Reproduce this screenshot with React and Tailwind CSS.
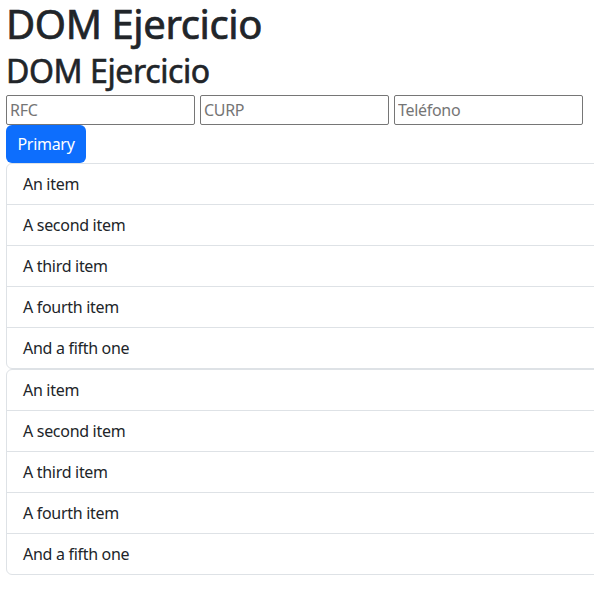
export default function App() {
  const items = ["An item", "A second item", "A third item", "A fourth item", "And a fifth one"];
  const List = () => (
    <ul className="w-[620px] border border-[#dee2e6] rounded-[6px] flex flex-col">
      {items.map((t, i) => (
        <li
          key={i}
          className={`px-4 flex items-center text-[16px] tracking-[-0.3px] text-[#212529] ${i < items.length - 1 ? "h-[41px] border-b border-[#dee2e6]" : "h-[40px]"}`}
        >
          {t}
        </li>
      ))}
    </ul>
  );
  return (
    <div
      className="w-[594px] h-[598px] overflow-hidden bg-white pl-[6px] text-[#212529]"
      style={{ fontFamily: '"Noto Sans", "Open Sans", sans-serif' }}
    >
      <h1 className="text-[40px] leading-[48px] font-normal tracking-[-0.4px] [-webkit-text-stroke:0.7px_#212529]">
        DOM Ejercicio
      </h1>
      <h2 className="mt-[3px] text-[32px] leading-[39px] font-normal tracking-[-0.4px] [-webkit-text-stroke:0.6px_#212529]">
        DOM Ejercicio
      </h2>
      <div className="mt-[5px] flex gap-[5px]">
        {["RFC", "CURP", "Teléfono"].map((p) => (
          <input
            key={p}
            placeholder={p}
            className="w-[189px] h-[30px] border border-[#767676] rounded-[2px] px-[3px] text-[16px] tracking-[-0.3px] placeholder:text-[#757575] outline-none"
          />
        ))}
      </div>
      <button className="w-[80px] h-[38px] rounded-[6px] bg-[#0d6efd] text-white text-[16px] tracking-[-0.3px]">Primary</button>
      <List />
      <List />
    </div>
  );
}
